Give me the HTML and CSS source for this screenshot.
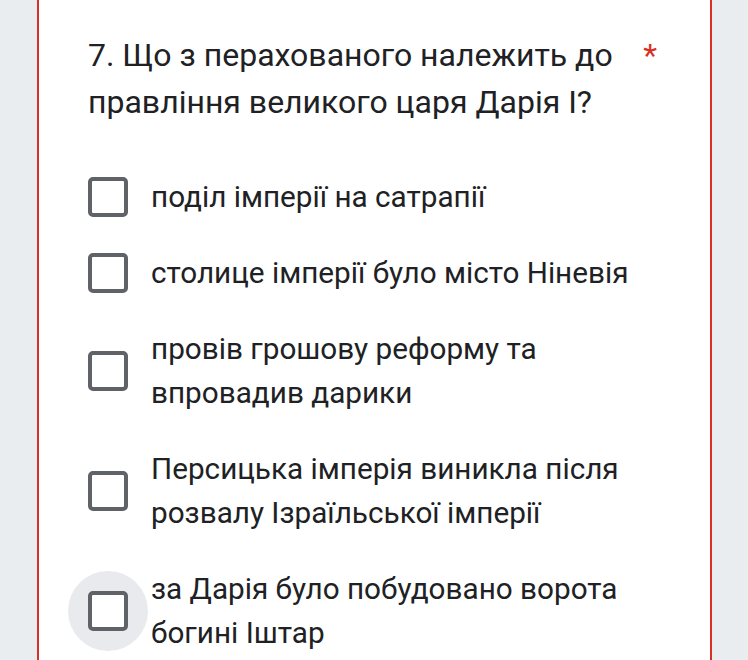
FILE: index.html
```html
<!DOCTYPE html>
<html lang="uk">
<head>
    <meta charset="UTF-8">
    <meta name="viewport" content="width=device-width, initial-scale=1.0">
    <title>Питання 7</title>
    <link rel="stylesheet" href="styles.css">
</head>
<body>

<div class="card card-error">
    <div class="question">
        <div class="question-title">7. Що з перахованого належить до правління великого царя Дарія I?</div>
        <span class="required">*</span>
    </div>

    <div class="options">
        <label class="option">
            <span class="box-wrap"><span class="box"></span></span>
            <span class="option-text">поділ імперії на сатрапії</span>
        </label>
        <label class="option">
            <span class="box-wrap"><span class="box"></span></span>
            <span class="option-text">столице імперії було місто Ніневія</span>
        </label>
        <label class="option">
            <span class="box-wrap"><span class="box"></span></span>
            <span class="option-text">провів грошову реформу та впровадив дарики</span>
        </label>
        <label class="option">
            <span class="box-wrap"><span class="box"></span></span>
            <span class="option-text">Персицька імперія виникла після розвалу Ізраїльської імперії</span>
        </label>
        <label class="option">
            <span class="box-wrap hover"><span class="box"></span></span>
            <span class="option-text">за Дарія було побудовано ворота богині Іштар</span>
        </label>
    </div>
</div>

</body>
</html>
```

FILE: styles.css
```css
html, body {
    height: 100%;
    overflow: hidden;
}

body {
    margin: 0;
    background-color: #e9edf0;
    font-family: Roboto, "Noto Sans", sans-serif;
    color: #202124;
}

.card {
    box-sizing: border-box;
    margin-left: 37px;
    width: 675px;
    min-height: 720px;
    padding: 32px 48px 0 49px;
    background-color: #fff;
    border-left: 2px solid #d93025;
    border-right: 2px solid #d93025;
}

.question {
    display: flex;
    align-items: flex-start;
}

.question-title {
    flex: 1;
    font-size: 32px;
    line-height: 47px;
    padding-right: 28px;
}

.required {
    color: #d93025;
    font-size: 32px;
    line-height: 47px;
    margin-right: 5px;
}

.options {
    margin-top: 33px;
}

.option {
    display: flex;
    align-items: center;
    padding: 16px 0;
}

.box-wrap {
    position: relative;
    flex: none;
    width: 40px;
    height: 40px;
    margin-right: 23px;
}

.box-wrap.hover::before {
    content: "";
    position: absolute;
    left: -20px;
    top: -20px;
    width: 80px;
    height: 80px;
    border-radius: 50%;
    background-color: #e8eaed;
}

.box {
    position: relative;
    display: block;
    box-sizing: border-box;
    width: 40px;
    height: 40px;
    border: 4px solid #5f6368;
    border-radius: 5px;
    background-color: #fff;
}

.option-text {
    font-size: 29.7px;
    line-height: 44px;
}
```
